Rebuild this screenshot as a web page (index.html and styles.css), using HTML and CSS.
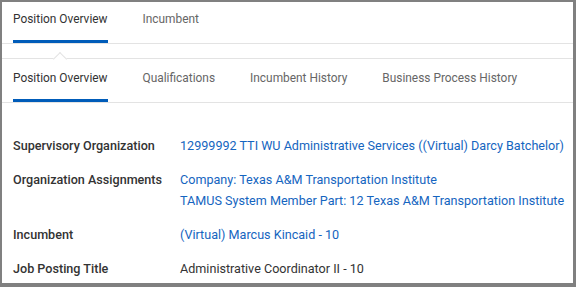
FILE: index.html
```html
<!DOCTYPE html>
<html lang="en">
<head>
  <meta charset="UTF-8">
  <title>Position Overview</title>
  <link rel="stylesheet" href="styles.css">
</head>
<body>

  <div class="panel">
    <!-- Abas principais -->
    <div class="tabs tabs-top">
      <div class="tab active">Position Overview</div>
      <div class="tab">Incumbent</div>
    </div>

    <div class="subnav">
      <span class="caret"></span>
      <div class="tabs tabs-sub">
        <div class="tab active">Position Overview</div>
        <div class="tab">Qualifications</div>
        <div class="tab">Incumbent History</div>
        <div class="tab">Business Process History</div>
      </div>
    </div>

    <!-- Campos -->
    <div class="fields">
      <div class="field">
        <div class="label">Supervisory Organization</div>
        <div class="value"><a href="#">12999992 TTI WU Administrative Services ((Virtual) Darcy Batchelor)</a></div>
      </div>
      <div class="field">
        <div class="label">Organization Assignments</div>
        <div class="value">
          <a href="#">Company: Texas A&amp;M Transportation Institute</a>
          <a href="#">TAMUS System Member Part: 12 Texas A&amp;M Transportation Institute</a>
        </div>
      </div>
      <div class="field">
        <div class="label">Incumbent</div>
        <div class="value"><a href="#">(Virtual) Marcus Kincaid - 10</a></div>
      </div>
      <div class="field">
        <div class="label">Job Posting Title</div>
        <div class="value plain">Administrative Coordinator II - 10</div>
      </div>
    </div>
  </div>

</body>
</html>
```

FILE: styles.css
```css
html, body { height: 100%; }
body {
  margin: 0;
  background: #808080;
  font-family: Roboto, "Liberation Sans", Arial, sans-serif;
  font-size: 12px;
  color: #333;
}
.panel {
  position: relative;
  background: #fff;
  margin: 2px 3px 0 2px;
  height: 281px;
  overflow: hidden;
}
.tabs {
  display: flex;
  gap: 35px;
  padding-left: 11px;
}
.tab {
  box-sizing: border-box;
  line-height: 20px;
  font-size: 11.9px;
  color: #666;
  border-bottom: 3px solid transparent;
}
.tab.active {
  color: #333;
  border-bottom-color: #005cb9;
}
.tabs-top {
  height: 41px;
  border-bottom: 1px solid #e3e3e3;
}
.tabs-top .tab {
  padding-top: 7px;
}
.subnav {
  position: relative;
  margin-top: 14px;
  border-top: 1px solid #e3e3e3;
}
.caret {
  position: absolute;
  left: 53px;
  top: -5px;
  width: 9px;
  height: 9px;
  background: #fff;
  border-top: 1px solid #e3e3e3;
  border-left: 1px solid #e3e3e3;
  transform: rotate(45deg);
}
.tabs-sub {
  height: 43px;
  border-bottom: 1px solid #e3e3e3;
}
.tabs-sub .tab {
  padding-top: 9px;
}
.fields {
  padding: 32px 0 0 11px;
  display: flex;
  flex-direction: column;
  gap: 13px;
  font-size: 12.6px;
}
.field {
  display: flex;
  line-height: 21px;
  white-space: nowrap;
}
.label {
  width: 167px;
  flex-shrink: 0;
  font-weight: 500;
  color: #333;
}
.value {
  display: flex;
  flex-direction: column;
}
.value a {
  color: #1565c0;
  text-decoration: none;
}
.value.plain { color: #333; }
```
